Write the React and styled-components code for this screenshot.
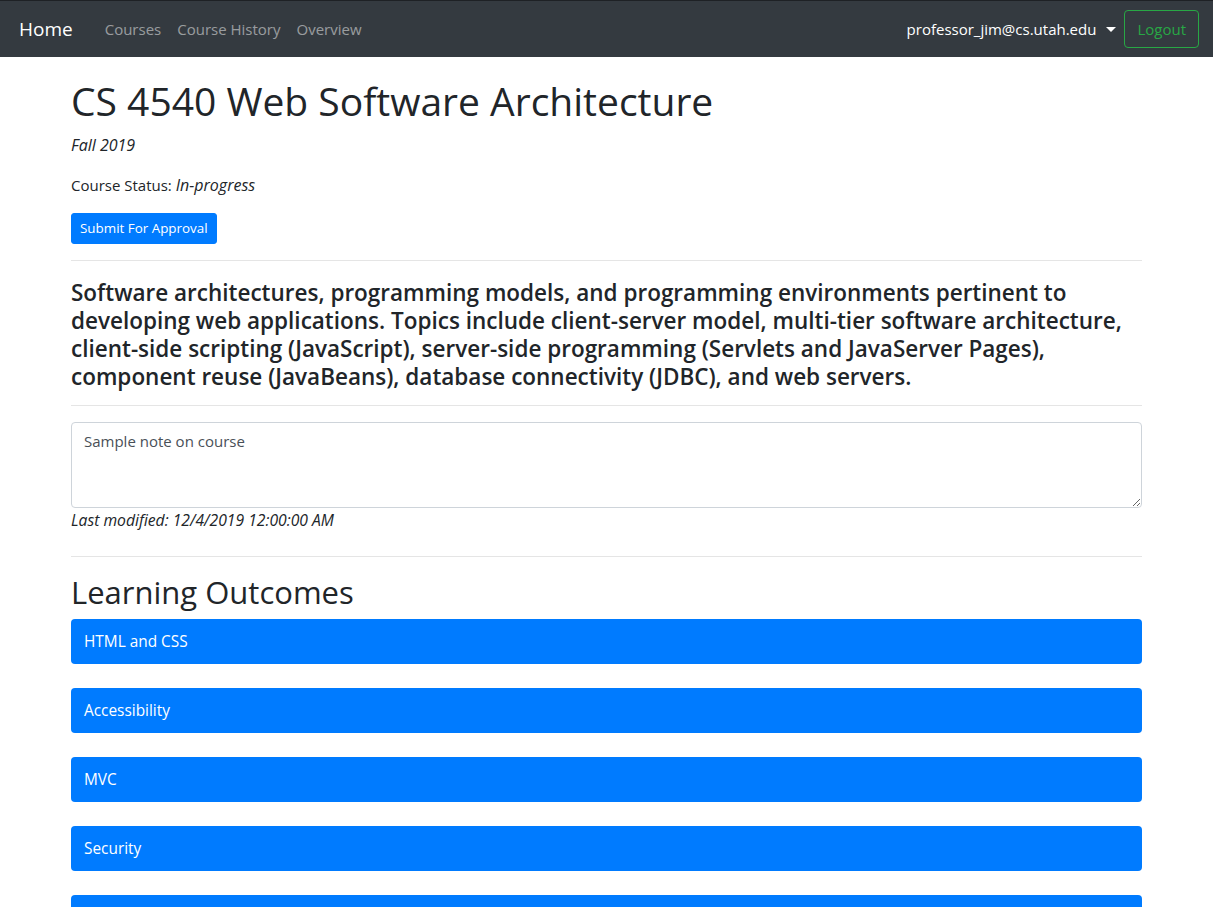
import React from "react";
import styled, { createGlobalStyle } from "styled-components";

const GlobalStyle = createGlobalStyle`
  * { box-sizing: border-box; }
  body {
    margin: 0;
    font-family: "Open Sans", "Noto Sans", sans-serif;
    font-size: 15px;
    line-height: 24px;
    color: #212529;
    background: #fff;
  }
  em {
    font-size: 16px;
  }
`;

const outcomes = ["HTML and CSS", "Accessibility", "MVC", "Security", "Testing"];

const App = () => {
  return (
    <>
      <GlobalStyle />
      <Navbar>
        <Brand href="#">Home</Brand>
        <NavLinks>
          <NavLink href="#">Courses</NavLink>
          <NavLink href="#">Course History</NavLink>
          <NavLink href="#">Overview</NavLink>
        </NavLinks>
        <NavRight>
          <UserMenu href="#">
            professor_jim@cs.utah.edu
            <Caret />
          </UserMenu>
          <LogoutButton>Logout</LogoutButton>
        </NavRight>
      </Navbar>
      <Container>
        <Title>CS 4540 Web Software Architecture</Title>
        <Para>
          <em>Fall 2019</em>
        </Para>
        <Para>
          Course Status: <em>In-progress</em>
        </Para>
        <SubmitButton>Submit For Approval</SubmitButton>
        <Rule />
        <Description>
          Software architectures, programming models, and programming environments pertinent to
          developing web applications. Topics include client-server model, multi-tier software
          architecture, client-side scripting (JavaScript), server-side programming (Servlets and
          JavaServer Pages), component reuse (JavaBeans), database connectivity (JDBC), and web
          servers.
        </Description>
        <Rule />
        <NoteArea rows={3} defaultValue="Sample note on course" />
        <Modified>Last modified: 12/4/2019 12:00:00 AM</Modified>
        <Rule $top={24} />
        <SectionTitle>Learning Outcomes</SectionTitle>
        <OutcomeList>
          {outcomes.map((o) => (
            <Outcome key={o}>{o}</Outcome>
          ))}
        </OutcomeList>
      </Container>
    </>
  );
};

//Styled Component
const Navbar = styled.nav`
  display: flex;
  align-items: center;
  height: 57px;
  padding: 0 14px 0 19px;
  background-color: #343a40;
  border-top: 1px solid #1e2125;
`;

const Brand = styled.a`
  font-size: 19px;
  color: #fff;
  text-decoration: none;
  margin-right: 24px;
  line-height: 30px;
`;

const NavLinks = styled.div`
  display: flex;
`;

const NavLink = styled.a`
  padding: 8px;
  color: rgba(255, 255, 255, 0.5);
  text-decoration: none;
`;

const NavRight = styled.div`
  margin-left: auto;
  display: flex;
  align-items: center;
`;

const UserMenu = styled.a`
  display: flex;
  align-items: center;
  color: #fff;
  text-decoration: none;
  padding: 8px;
`;

const Caret = styled.span`
  display: inline-block;
  margin-left: 10px;
  width: 0;
  height: 0;
  border-top: 5px solid #fff;
  border-left: 5px solid transparent;
  border-right: 5px solid transparent;
`;

const LogoutButton = styled.button`
  font-family: inherit;
  font-size: 15px;
  line-height: 24px;
  height: 38px;
  padding: 6px 12px;
  background: transparent;
  color: #28a745;
  border: 1px solid #28a745;
  border-radius: 4px;
`;

const Container = styled.main`
  max-width: 1101px;
  margin: 0 auto;
  padding: 20px 15px 0;
`;

const Title = styled.h1`
  margin: 0 0 8px;
  font-size: 39px;
  font-weight: 400;
  line-height: 48px;
`;

const Para = styled.p`
  margin: 0 0 16px;
`;

const SubmitButton = styled.button`
  font-family: inherit;
  font-size: 13.4px;
  line-height: 21px;
  padding: 4px 8px;
  color: #fff;
  background-color: #007bff;
  border: 1px solid #007bff;
  border-radius: 3px;
`;

const Rule = styled.hr`
  margin: ${(p) => p.$top || 16}px 0 16px;
  border: 0;
  border-top: 1px solid rgba(0, 0, 0, 0.1);
`;

const Description = styled.h4`
  margin: 0;
  padding: 2px 0 0;
  height: 112px;
  font-size: 22.5px;
  font-weight: 600;
  line-height: 28px;
`;

const NoteArea = styled.textarea`
  display: block;
  width: 100%;
  height: 86px;
  padding: 6px 12px;
  font-family: inherit;
  font-size: 15px;
  line-height: 24px;
  color: #495057;
  border: 1px solid #ced4da;
  border-radius: 4px;
  resize: vertical;
`;

const Modified = styled.p`
  margin: 0;
  font-style: italic;
  font-size: 15.7px;
`;

const SectionTitle = styled.h2`
  margin: 0 0 8px;
  font-size: 31px;
  font-weight: 400;
  line-height: 38px;
`;

const OutcomeList = styled.div`
  display: flex;
  flex-direction: column;
  gap: 24px;
`;

const Outcome = styled.div`
  height: 45px;
  padding: 0 13px;
  font-size: 15.4px;
  line-height: 45px;
  color: #fff;
  background-color: #007bff;
  border-radius: 4px;
`;

export default App;
